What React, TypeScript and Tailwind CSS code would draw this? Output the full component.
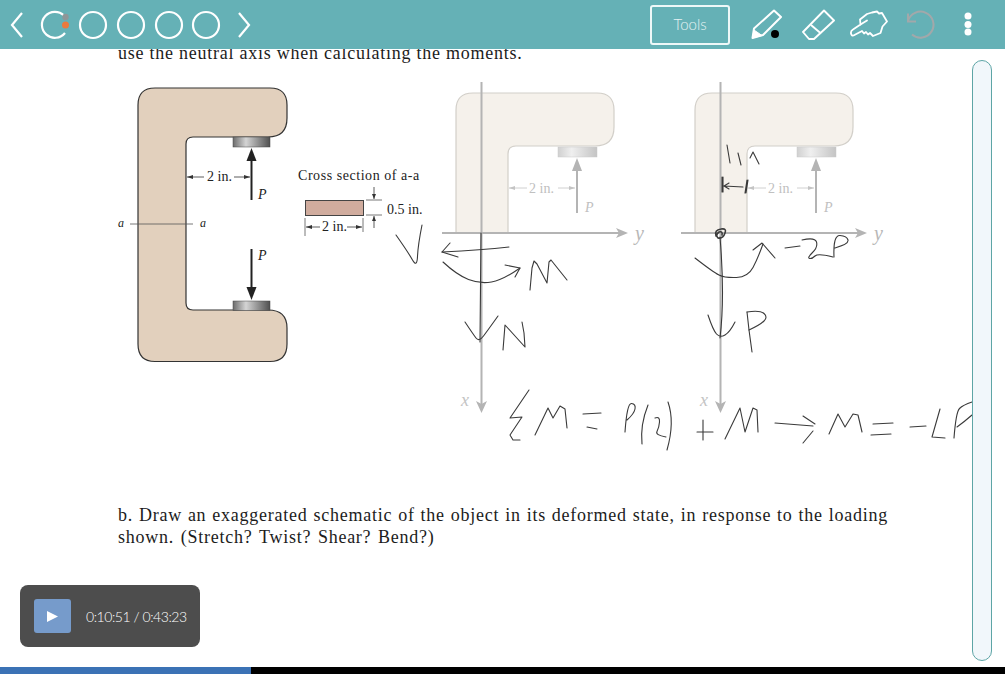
type Pt = [number, number];

const smooth = (pts: Pt[]) => {
  if (pts.length < 3) return "M" + pts.map((p) => p.join(" ")).join("L");
  let d = `M${pts[0][0]} ${pts[0][1]}`;
  for (let i = 1; i < pts.length - 1; i++) {
    const last = i === pts.length - 2;
    const mx = last ? pts[i + 1][0] : (pts[i][0] + pts[i + 1][0]) / 2;
    const my = last ? pts[i + 1][1] : (pts[i][1] + pts[i + 1][1]) / 2;
    d += `Q${pts[i][0]} ${pts[i][1]} ${mx} ${my}`;
  }
  return d;
};

const curves: Pt[][] = [
  [[509, 247], [482, 250], [442, 252]],
  [[443, 262], [457, 275], [480, 284], [503, 280], [520, 268]],
  [[396, 235], [408, 252], [417, 268], [418, 245], [422, 225]],
  [[695, 258], [713, 272], [725, 278], [748, 277], [758, 258], [763, 244]],
  [[720, 237], [725, 297], [720, 338]],
  [[708, 315], [713, 330], [720, 338], [730, 332], [735, 322]],
  [[465, 322], [473, 334], [479, 342], [488, 330], [498, 316]],
  [[802, 240], [815, 237], [818, 247], [807, 258], [812, 259], [818, 253], [833, 257]],
  [[834, 257], [833, 235], [847, 236], [849, 244], [835, 248]],
  [[747, 312], [760, 310], [768, 317], [760, 325], [749, 330]],
  [[625, 432], [627, 403], [636, 404], [634, 414], [627, 420]],
  [[648, 405], [640, 425], [642, 444]],
  [[655, 418], [660, 416], [659, 428], [655, 435], [666, 437]],
  [[668, 402], [675, 422], [667, 450]],
  [[954, 438], [956, 412], [963, 405], [972, 402]],
  [[957, 427], [964, 422], [972, 415]],
];

const lines: string[] = [
  "M450 243L442 252L458 257",
  "M481 233L480 342",
  "M505 265L520 268L515 277",
  "M530 290L532 268L534 261L537 264L547 283L549 262L551 260L567 280",
  "M503 350L505 325L525 347L524 333L522 322",
  "M752 352L749 330L747 312",
  "M727 145L730 163M738 153L741 165M750 158L753 152L759 164",
  "M722 177L722 192M723 177L723 192M747 180L745 193M748 180L746 193M724 186L743 187M724 186L729 183M724 186L729 189",
  "M753 250L762 243L775 258",
  "M785 248L800 246",
  "M529 390L510 418L522 417L510 435L513 440L520 440",
  "M535 435L548 408L553 418L560 406L565 409L567 428",
  "M583 414L601 413M587 427L597 429",
  "M697 432L713 432M703 420L703 440",
  "M725 439L740 408L745 432L753 408L757 410L758 432",
  "M775 423L813 426M803 416L815 424M813 431L803 443",
  "M829 434L838 414L845 427L853 414L858 415L862 432",
  "M873 424L893 423M871 435L891 434",
  "M910 427L926 426",
  "M940 409L932 437L945 438",
];

const Arrow = ({ x, y1, y2, c, w = 2 }: { x: number; y1: number; y2: number; c: string; w?: number }) => {
  const s = y2 > y1 ? -1 : 1;
  return (
    <g>
      <line x1={x} x2={x} y1={y1} y2={y2 + s * 10} stroke={c} strokeWidth={w} />
      <polygon points={`${x},${y2} ${x - 5},${y2 + s * 13} ${x + 5},${y2 + s * 13}`} fill={c} />
    </g>
  );
};

const Dim = ({ x1, x2, y, c }: { x1: number; x2: number; y: number; c: string }) => {
  const s = x2 > x1 ? 1 : -1;
  return (
    <g>
      <line x1={x1} x2={x2} y1={y} y2={y} stroke={c} strokeWidth={0.8} />
      <polygon points={`${x2},${y} ${x2 - s * 6},${y - 2} ${x2 - s * 6},${y + 2}`} fill={c} />
    </g>
  );
};

const Faded = ({ dx }: { dx: number }) => (
  <g transform={`translate(${dx} 0)`}>
    <path
      d="M473 93H597Q614 93 614 110V127Q614 146 595 146H516Q508 146 508 154V233H456V110Q456 93 473 93Z"
      fill="#f5f1eb"
      stroke="#d2cfc9"
      strokeWidth={1.2}
    />
    <rect x={558} y={147} width={39} height={10} fill="url(#fadeBlock)" stroke="#c9c9c9" strokeWidth={0.5} />
    <Arrow x={577} y1={213} y2={158} c="#b4b4b4" />
    <Dim x1={527} x2={509} y={188} c="#c4c4c4" />
    <Dim x1={558} x2={575} y={188} c="#c4c4c4" />
    <text x={529} y={193} fontSize={14} fill="#c0c0c0" fontFamily="'Liberation Serif', serif">2 in.</text>
    <text x={585} y={212} fontSize={14} fill="#c0c0c0" fontStyle="italic" fontFamily="'Liberation Serif', serif">P</text>
    <line x1={442} x2={622} y1={233} y2={233} stroke="#b4b4b4" strokeWidth={2} />
    <polygon points="628,233 616,228 619,233 616,238" fill="#b4b4b4" />
    <text x={635} y={240} fontSize={20} fill="#b8b8b8" fontStyle="italic" fontFamily="'Liberation Serif', serif">y</text>
    <line x1={481.5} x2={481.5} y1={82} y2={408} stroke="#b4b4b4" strokeWidth={2} />
    <polygon points="481.5,413 476,401 481.5,404 487,401" fill="#b4b4b4" />
    <text x={461} y={406} fontSize={18} fill="#c4c4c4" fontStyle="italic" fontFamily="'Liberation Serif', serif">x</text>
  </g>
);

export default function App() {
  return (
    <div className="relative flex h-[674px] w-[1005px] flex-col overflow-hidden bg-white">
      <header className="relative z-10 flex h-[49px] shrink-0 items-center bg-[#65b1b6] pl-[10px] pr-[33px]">
        <svg width="250" height="49" viewBox="0 0 250 49" fill="none" stroke="#fff" strokeWidth="2.2">
          <path d="M12 13L2 25L12 37" />
          <path d="M54 15.5A13 13 0 1 0 55 33" />
          <circle cx="83" cy="25" r="13" />
          <circle cx="121" cy="25" r="13" />
          <circle cx="159" cy="25" r="13" />
          <circle cx="196" cy="25" r="13" />
          <path d="M229 13L239 25L229 37" />
          <circle cx="55.5" cy="17" r="3.2" fill="#8f9698" stroke="none" />
          <circle cx="55.5" cy="25" r="3.5" fill="#ea7a3d" stroke="none" />
        </svg>
        <button className="ml-[390px] flex h-[40px] w-[80px] items-center justify-center rounded-[3px] border-2 border-[#eef8f8] font-['Lato',sans-serif] text-[15px] font-light text-[#e4f2f2]">
          Tools
        </button>
        <svg className="ml-[21px]" width="36" height="49" viewBox="750 0 36 49" fill="none" stroke="#fff" strokeWidth="2" strokeLinejoin="round">
          <path d="M751.5 38L753 28.5L773 10.5L780 17L762 35Z" />
          <path d="M751.5 38L753 30L761 35.5Z" fill="#fff" strokeWidth="1" />
          <circle cx="774" cy="34" r="4" fill="#000" stroke="none" />
        </svg>
        <svg className="ml-[15px]" width="36" height="49" viewBox="801 0 36 49" fill="none" stroke="#fff" strokeWidth="1.9" strokeLinejoin="round">
          <path d="M823 10.5L833 20.5L813 39H808L802 32Z" />
          <path d="M810 25L820 33.5" />
        </svg>
        <svg className="ml-[12px]" width="40" height="49" viewBox="850 0 40 49" fill="none" stroke="#fff" strokeWidth="1.8" strokeLinejoin="round" strokeLinecap="round">
          <path d="M851 33.5Q850.5 31 853 29.5L860.5 24.5L860 19.5L867 14L872 12.5L877 11.5L879 13.5L882 13L887 21.5L882.5 26.5L880.5 33L873 36L870 33L868 34.5L866 32L864 33.5L862 31L853.5 35.5Q851.5 36 851 33.5Z" />
          <path d="M860.5 24.5L867 20.5" />
        </svg>
        <svg className="ml-[16px]" width="30" height="49" viewBox="907 0 30 49" fill="none" stroke="#a2a8aa" strokeWidth="2">
          <path d="M909 21A13 13 0 1 1 913 34.5" />
          <path d="M909 13.5V21.5H917" />
        </svg>
        <svg className="ml-auto" width="8" height="49" viewBox="964 0 8 49" fill="#fff">
          <circle cx="968" cy="16" r="3.5" />
          <circle cx="968" cy="24.5" r="3.5" />
          <circle cx="968" cy="32" r="3.5" />
        </svg>
      </header>

      <main className="-mt-[7px] flex flex-col font-['Liberation_Serif',serif] text-[18px] leading-[22px] text-[#1c1c1c]">
        <p className="pl-[118px] tracking-[0.75px]">use the neutral axis when calculating the moments.</p>
        <svg className="block shrink-0" width="1005" height="440" viewBox="0 64 1005 440">
          <defs>
            <linearGradient id="block">
              <stop offset="0" stopColor="#6c6c6c" />
              <stop offset="0.35" stopColor="#d4d4d4" />
              <stop offset="1" stopColor="#4f4f4f" />
            </linearGradient>
            <linearGradient id="fadeBlock">
              <stop offset="0" stopColor="#d0d0d0" />
              <stop offset="0.35" stopColor="#efefef" />
              <stop offset="1" stopColor="#c4c4c4" />
            </linearGradient>
          </defs>
          <path
            d="M155 88H270Q287 88 287 105V118Q287 137 268 137H193Q186 137 186 144V303Q186 310 193 310H268Q287 310 287 328V344Q287 361.5 270 361.5H155Q138 361.5 138 344V105Q138 88 155 88Z"
            fill="#e2d0bd"
            stroke="#333"
            strokeWidth="1.2"
          />
          <rect x="233" y="137" width="37" height="10" fill="url(#block)" stroke="#444" strokeWidth="0.5" />
          <rect x="233" y="301" width="37" height="9.5" fill="url(#block)" stroke="#444" strokeWidth="0.5" />
          <Arrow x={251.5} y1={200} y2={148} c="#222" />
          <Arrow x={251.5} y1={249} y2={300} c="#222" />
          <Dim x1={204} x2={187} y={177} c="#333" />
          <Dim x1={234} x2={250} y={177} c="#333" />
          <line x1="130" x2="193" y1="224" y2="224" stroke="#555" strokeWidth="0.8" />
          <g fontFamily="'Liberation Serif', serif" fill="#222">
            <text x="207" y="181" fontSize="14">2 in.</text>
            <text x="258" y="199" fontSize="14" fontStyle="italic">P</text>
            <text x="258" y="260" fontSize="14" fontStyle="italic">P</text>
            <text x="118" y="227" fontSize="12" fontStyle="italic">a</text>
            <text x="200" y="227" fontSize="12" fontStyle="italic">a</text>
            <text x="298" y="180" fontSize="14" letterSpacing="0.55">Cross section of a-a</text>
            <text x="387" y="214" fontSize="14">0.5 in.</text>
            <text x="322" y="231" fontSize="14">2 in.</text>
          </g>
          <rect x="305.5" y="200.5" width="58" height="15" fill="#d0ac9e" stroke="#444" strokeWidth="1" />
          <path d="M366 200H382M366 215H382M305 218V236M363 218V232" stroke="#555" strokeWidth="0.8" fill="none" />
          <Dim x1={320} x2={306} y={227} c="#333" />
          <Dim x1={347} x2={362} y={227} c="#333" />
          <path d="M374 187V199M374 228V216" stroke="#333" strokeWidth="0.8" />
          <path d="M372 194L374 199L376 194M372 221L374 216L376 221" fill="#333" />

          <Faded dx={0} />
          <Faded dx={239} />

          <g fill="none" stroke="#3a3a3a" strokeWidth="1.1" strokeLinecap="round" strokeLinejoin="round">
            {curves.map((c, i) => (
              <path key={i} d={smooth(c)} />
            ))}
            {lines.map((d, i) => (
              <path key={i} d={d} />
            ))}
            <path d="M716 236Q714 230 721 229Q727 228 725 233Q723 239 718 238Q715 235 719 232Q723 231 722 235" strokeWidth="1.6" />
          </g>
        </svg>
        <div className="ml-[118px] w-[770px] tracking-[0.75px]">
          <p className="whitespace-nowrap text-justify [text-align-last:justify]">
            b. Draw an exaggerated schematic of the object in its deformed state, in response to the loading
          </p>
          <p className="[word-spacing:1.5px]">shown. (Stretch? Twist? Shear? Bend?)</p>
        </div>
      </main>

      <div className="mt-auto flex h-[7px] shrink-0 bg-black">
        <div className="w-[251px] bg-[#3b72b5]" />
      </div>

      <div className="absolute left-[20px] top-[585px] flex h-[62px] w-[180px] items-center gap-[15px] rounded-[8px] bg-[#4d4d4d] pl-[14px]">
        <button className="flex h-[34px] w-[37px] items-center justify-center rounded-[3px] bg-[#769bcb]">
          <svg width="11" height="11" viewBox="0 0 11 11" fill="#fff">
            <polygon points="0,0 11,5.5 0,11" />
          </svg>
        </button>
        <span className="font-['Lato',sans-serif] text-[14px] font-light tracking-[-0.45px] text-white">0:10:51 / 0:43:23</span>
      </div>

      <div className="absolute left-[972px] top-[60px] h-[601px] w-[20px] rounded-[10px] border-[1.5px] border-[#5da5a6] bg-[#f1f7fb]" />
    </div>
  );
}
